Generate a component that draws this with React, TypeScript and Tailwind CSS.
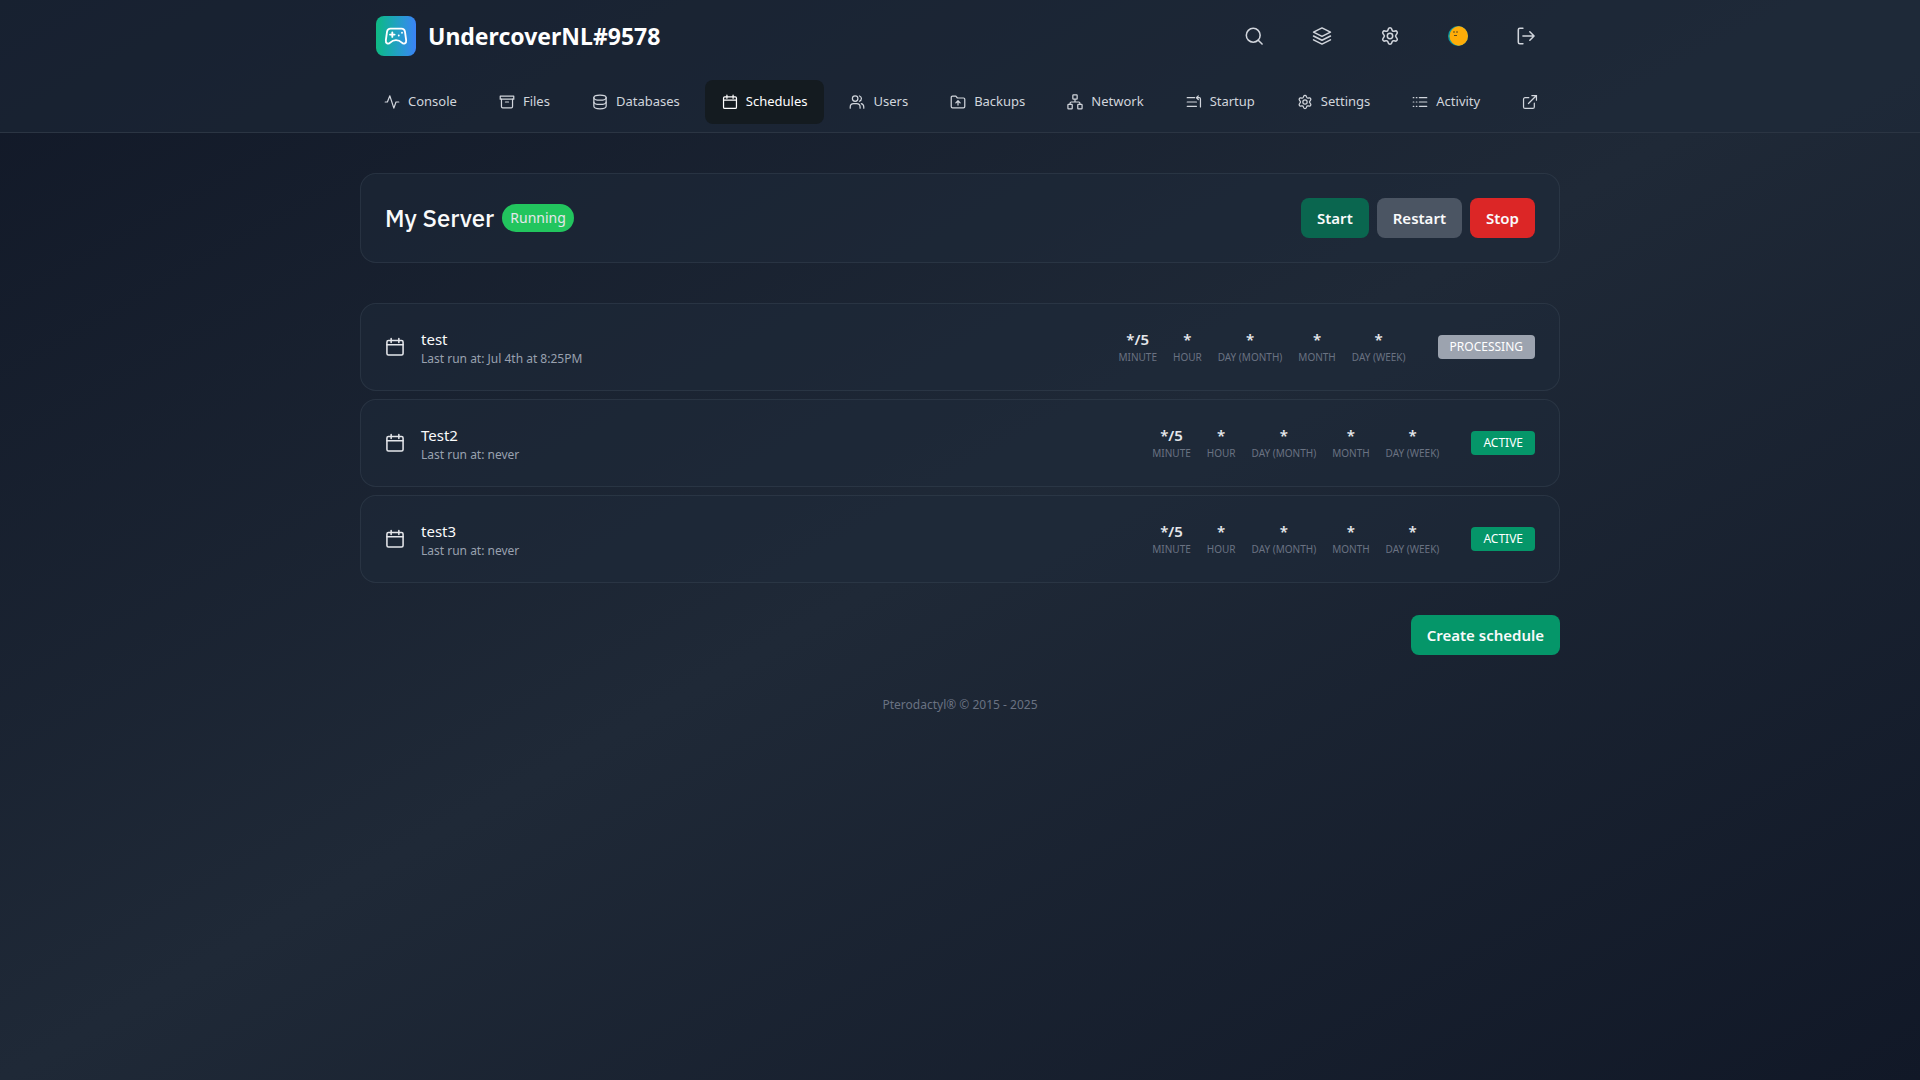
import type { ReactNode } from 'react';
import clsx from 'clsx';

type IconProps = { className?: string; children: ReactNode };

function Icon({ className = 'size-4', children }: IconProps) {
  return (
    <svg
      viewBox="-1 -1 26 26"
      className={clsx('shrink-0', className)}
      fill="none"
      stroke="currentColor"
      strokeWidth={2}
      strokeLinecap="round"
      strokeLinejoin="round"
      aria-hidden="true"
    >
      {children}
    </svg>
  );
}

const icons = {
  console: <path d="M1 12h3.500l4-10 6.500 20 3.500-10H23" />,
  files: (
    <>
      <path d="M1 2.500h22v5H1z" />
      <path d="M3 7.500v12a2 2 0 0 0 2 2h14a2 2 0 0 0 2-2v-12M9.500 12h5" />
    </>
  ),
  databases: (
    <>
      <ellipse cx="12" cy="5" rx="10" ry="4" />
      <path d="M2 5v14c0 2.200 4.500 4 10 4s10-1.800 10-4V5" />
      <path d="M2 12c0 2.200 4.500 4 10 4s10-1.800 10-4" />
    </>
  ),
  calendar: (
    <>
      <rect x="1.500" y="3.500" width="21" height="19" rx="2" />
      <path d="M1.500 9h21M7 1v5M17 1v5" />
    </>
  ),
  users: (
    <>
      <circle cx="9" cy="6.500" r="4.500" />
      <path d="M1 22v-2a5.500 5.500 0 0 1 5.500-5.500h5A5.500 5.500 0 0 1 17 20v2M16 2.200a4.500 4.500 0 0 1 0 8.600M19 14.700a5.500 5.500 0 0 1 4 5.300v2" />
    </>
  ),
  backups: (
    <>
      <path d="M1 4.500a2 2 0 0 1 2-2h5.500l2.500 3h10a2 2 0 0 1 2 2v12a2 2 0 0 1-2 2H3a2 2 0 0 1-2-2z" />
      <path d="M12 17v-6.500M8.500 13.500 12 10l3.500 3.500" />
    </>
  ),
  network: (
    <>
      <rect x="8.500" y="0.500" width="7" height="7" rx="1" />
      <rect x="0.500" y="16" width="7" height="7" rx="1" />
      <rect x="16.500" y="16" width="7" height="7" rx="1" />
      <path d="M12 8v4M4 16v-2a2 2 0 0 1 2-2h12a2 2 0 0 1 2 2v2" />
    </>
  ),
  startup: <path d="M1 5h12M1 12h15M1 19h15M22.500 20V7a2 2 0 0 0-2-2h-4M19 2l-3 3 3 3" />,
  settings: (
    <>
      <circle cx="12" cy="12" r="3.500" />
      <path d="M9.800 2.800a2.300 2.300 0 0 1 4.400 0l.4 1.300a2.300 2.300 0 0 0 2.700 1.600l1.400-.3a2.300 2.300 0 0 1 2.200 3.800l-.9 1.200a2.300 2.300 0 0 0 0 3.200l.9 1.200a2.300 2.300 0 0 1-2.200 3.800l-1.400-.3a2.300 2.300 0 0 0-2.700 1.600l-.4 1.300a2.300 2.300 0 0 1-4.400 0l-.4-1.300a2.300 2.300 0 0 0-2.700-1.600l-1.400.3a2.300 2.300 0 0 1-2.200-3.800l.9-1.200a2.300 2.300 0 0 0 0-3.200l-.9-1.200a2.300 2.300 0 0 1 2.200-3.800l1.400.3a2.300 2.300 0 0 0 2.700-1.600z" />
    </>
  ),
  activity: <path d="M1 5h1M6 5h1M1 12h1M6 12h1M1 19h1M6 19h1M11 5h12M11 12h12M11 19h12" />,
  external: <path d="M10 5H4a2.500 2.500 0 0 0-2.500 2.500V20A2.500 2.500 0 0 0 4 22.500h12.500A2.500 2.500 0 0 0 19 20v-6M9.500 14.500l13-13M15 1.500h7.500V9" />,
  search: (
    <>
      <circle cx="11" cy="11" r="9" />
      <path d="m17.500 17.500 5 5" />
    </>
  ),
  layers: <path d="M12 1.500 23 7l-11 5.500L1 7zM1 12l11 5.500L23 12M1 17l11 5.500L23 17" />,
  logout: <path d="M8 2H4a2 2 0 0 0-2 2v16a2 2 0 0 0 2 2h4M8 12h14.500M17 6.500l5.500 5.500-5.500 5.500" />,
  gamepad: (
    <>
      <path d="M6 4h12c2 0 3.300 1.200 3.700 3.200L23 16.500c.5 3.500-2.700 4.800-4.700 2.700-1.700-1.700-3.300-2.700-6.300-2.700s-4.600 1-6.300 2.700C3.700 21.300.5 20 1 16.500l1.300-9.300C2.700 5.200 4 4 6 4z" />
      <path d="M8 8v5M5.500 10.500h5M18.500 8.500h.01M15 11.500h.01" />
    </>
  ),
};

const NAV_ITEMS = [
  { label: 'Console', icon: icons.console },
  { label: 'Files', icon: icons.files },
  { label: 'Databases', icon: icons.databases },
  { label: 'Schedules', icon: icons.calendar, active: true },
  { label: 'Users', icon: icons.users },
  { label: 'Backups', icon: icons.backups },
  { label: 'Network', icon: icons.network },
  { label: 'Startup', icon: icons.startup },
  { label: 'Settings', icon: icons.settings },
  { label: 'Activity', icon: icons.activity },
];

const SCHEDULES = [
  { name: 'test', lastRun: 'Jul 4th at 8:25PM', status: 'PROCESSING' },
  { name: 'Test2', lastRun: 'never', status: 'ACTIVE' },
  { name: 'test3', lastRun: 'never', status: 'ACTIVE' },
];

const CRON = [
  { value: '*/5', label: 'MINUTE' },
  { value: '*', label: 'HOUR' },
  { value: '*', label: 'DAY (MONTH)' },
  { value: '*', label: 'MONTH' },
  { value: '*', label: 'DAY (WEEK)' },
];

function Avatar() {
  return (
    <svg viewBox="0 0 20 20" className="size-5 rounded-full" aria-hidden="true">
      <rect width="20" height="20" fill="#0d9aa0" />
      <circle cx="11.500" cy="10" r="10" fill="#ffad08" />
      <path d="M5 6h2M8 6h2M6 9.500h3" stroke="#5c4a1d" strokeWidth="1" />
    </svg>
  );
}

function Header() {
  return (
    <header className="border-b border-[#2b3543] bg-gray-800/50">
      <div className="mx-auto max-w-[1200px]">
        <div className="flex h-[72px] items-center justify-between pl-4">
          <a href="#" className="flex items-center gap-3">
            <span className="flex size-10 items-center justify-center rounded-lg bg-linear-to-r from-[#10b981] to-[#3b82f6] text-white">
              <Icon className="size-6">{icons.gamepad}</Icon>
            </span>
            <span className="text-[23px] font-bold text-white">UndercoverNL#9578</span>
          </a>
          <div className="flex items-center text-gray-300">
            <button type="button" aria-label="Search" className="px-6"><Icon className="size-5">{icons.search}</Icon></button>
            <a href="#" aria-label="Dashboard" className="px-6"><Icon className="size-5">{icons.layers}</Icon></a>
            <a href="#" aria-label="Admin" className="px-6"><Icon className="size-5">{icons.settings}</Icon></a>
            <a href="#" aria-label="Account" className="px-6"><Avatar /></a>
            <button type="button" aria-label="Sign out" className="px-6"><Icon className="size-5">{icons.logout}</Icon></button>
          </div>
        </div>

        <nav className="flex items-center gap-2 py-2 pl-[7px] text-[13px] text-gray-300">
          {NAV_ITEMS.map((item) => (
            <a
              key={item.label}
              href="#"
              className={clsx(
                'flex h-11 items-center gap-2 rounded-lg px-[17px] whitespace-nowrap',
                item.active && 'bg-[#141b20] text-white',
              )}
            >
              <Icon>{item.icon}</Icon>
              {item.label}
            </a>
          ))}
          <a href="#" aria-label="Open in admin" className="px-[17px]"><Icon>{icons.external}</Icon></a>
        </nav>
      </div>
    </header>
  );
}

export default function App() {
  return (
    <div className="min-h-screen bg-linear-to-br from-[#111827] via-[#1f2937] to-[#111827] font-['Segoe_UI','Noto_Sans',sans-serif] text-gray-200">
      <Header />

      <main className="mx-auto max-w-[1200px] pt-10">
        <section className="flex h-[90px] items-center justify-between rounded-2xl border border-gray-600/30 bg-gray-800/50 px-6">
          <div className="flex items-center gap-2">
            <h1 className="font-['IBM_Plex_Sans',Roboto,sans-serif] text-2xl font-medium text-gray-50">My Server</h1>
            <span className="rounded-full bg-[#22c55e] px-2 py-1 text-sm">Running</span>
          </div>
          <div className="flex gap-2 text-[15px] font-semibold text-gray-50">
            <button type="button" disabled className="h-10 rounded-lg bg-[#0a664f] px-4">Start</button>
            <button type="button" className="h-10 rounded-lg bg-[#4b5563] px-4">Restart</button>
            <button type="button" className="h-10 rounded-lg bg-[#dc2626] px-4">Stop</button>
          </div>
        </section>

        <div className="mt-10 flex flex-col gap-2">
          {SCHEDULES.map((schedule) => (
            <a
              key={schedule.name}
              href="#"
              className="flex h-[88px] items-center rounded-2xl border border-gray-600/30 bg-gray-800/50 px-6"
            >
              <Icon className="size-5">{icons.calendar}</Icon>
              <div className="ml-4 flex-1">
                <p className="text-[15px] leading-6 text-gray-50">{schedule.name}</p>
                <p className="text-xs leading-4 text-gray-400">Last run at: {schedule.lastRun}</p>
              </div>
              <div className="mr-8 flex gap-4 text-center">
                {CRON.map((field) => (
                  <div key={field.label}>
                    <p className="text-[15px] leading-5 font-semibold">{field.value}</p>
                    <p className="text-[10px] leading-4 text-gray-500">{field.label}</p>
                  </div>
                ))}
              </div>
              <span
                className={clsx(
                  'flex h-6 items-center rounded-sm px-3 text-xs text-white',
                  schedule.status === 'ACTIVE' ? 'bg-[#059669]' : 'bg-[#9ca3af]',
                )}
              >
                {schedule.status}
              </span>
            </a>
          ))}
        </div>

        <div className="mt-8 flex justify-end">
          <button type="button" className="h-10 rounded-lg bg-[#059669] px-4 text-[15px] font-semibold text-gray-50">
            Create schedule
          </button>
        </div>
      </main>

      <footer className="pt-10 text-center text-xs leading-5 text-gray-500">
        <a href="#">Pterodactyl®</a> © 2015 - 2025
      </footer>
    </div>
  );
}
